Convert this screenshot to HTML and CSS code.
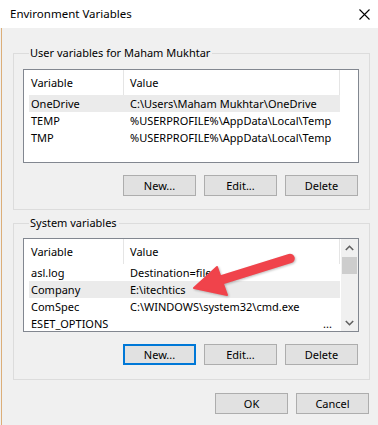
FILE: index.html
```html
<!DOCTYPE html>
<html lang="en">
<head>
<meta charset="utf-8">
<title>Environment Variables</title>
<link rel="stylesheet" href="styles.css">
</head>
<body>
<div class="window">
  <div class="titlebar">
    <span class="title">Environment Variables</span>
    <svg class="close" width="11" height="11" viewBox="0 0 11 11"><path d="M0.5 0.5 L10.5 10.5 M10.5 0.5 L0.5 10.5" stroke="#000" stroke-width="1.1" fill="none"/></svg>
  </div>
  <div class="content">
    <div class="group">
      <div class="group-label">User variables for Maham Mukhtar</div>
      <div class="list">
        <div class="cols">
          <div class="row header"><div class="c1">Variable</div><div class="c2">Value</div></div>
          <div class="row selected"><div class="c1">OneDrive</div><div class="c2">C:\Users\Maham Mukhtar\OneDrive</div></div>
          <div class="row"><div class="c1">TEMP</div><div class="c2">%USERPROFILE%\AppData\Local\Temp</div></div>
          <div class="row"><div class="c1">TMP</div><div class="c2">%USERPROFILE%\AppData\Local\Temp</div></div>
        </div>
      </div>
      <div class="buttons">
        <button class="btn">New...</button>
        <button class="btn">Edit...</button>
        <button class="btn">Delete</button>
      </div>
    </div>
    <div class="group group-system">
      <div class="group-label">System variables</div>
      <div class="list">
        <div class="cols">
          <div class="row header"><div class="c1">Variable</div><div class="c2">Value</div></div>
          <div class="row"><div class="c1">asl.log</div><div class="c2">Destination=file</div></div>
          <div class="row selected"><div class="c1">Company</div><div class="c2">E:\itechtics</div></div>
          <div class="row"><div class="c1">ComSpec</div><div class="c2">C:\WINDOWS\system32\cmd.exe</div></div>
          <div class="row"><div class="c1">ESET_OPTIONS</div><div class="c2 trunc">...</div></div>
        </div>
        <div class="scrollbar">
          <div class="sb-arrow"><svg width="9" height="6" viewBox="0 0 9 6"><path d="M0.8 5 L4.5 1.3 L8.2 5" stroke="#606060" stroke-width="1.6" fill="none"/></svg></div>
          <div class="sb-track"><div class="sb-thumb"></div></div>
          <div class="sb-arrow"><svg width="9" height="6" viewBox="0 0 9 6"><path d="M0.8 1 L4.5 4.7 L8.2 1" stroke="#606060" stroke-width="1.6" fill="none"/></svg></div>
        </div>
      </div>
      <div class="buttons">
        <button class="btn focused">New...</button>
        <button class="btn">Edit...</button>
        <button class="btn">Delete</button>
      </div>
    </div>
    <div class="dialog-buttons">
      <button class="btn">OK</button>
      <button class="btn">Cancel</button>
    </div>
  </div>
  <svg class="arrow" width="378" height="425" viewBox="0 0 378 425">
    <g fill="#f0434b" stroke="#f0434b">
      <line x1="290" y1="258.5" x2="221" y2="280" stroke-width="9.5" stroke-linecap="round"/>
      <polygon points="194,288 217,267 227,295" stroke-width="2" stroke-linejoin="round"/>
    </g>
  </svg>
</div>
</body>
</html>
```

FILE: styles.css
```css
* {
  box-sizing: border-box;
}

html, body {
  margin: 0;
  padding: 0;
}

body {
  width: 378px;
  height: 425px;
  overflow: hidden;
  background: #f0f0f0;
  font-family: "Noto Sans", "Open Sans", sans-serif;
  font-size: 11px;
  color: #000;
}

.window {
  position: relative;
  width: 378px;
  height: 425px;
}

.titlebar {
  height: 28px;
  background: #fff;
  display: flex;
  align-items: center;
  padding-left: 10px;
  padding-right: 8px;
}

.title {
  flex: 1;
  line-height: 16px;
  font-size: 11.5px;
}

.close {
  display: block;
}

.content {
  height: 397px;
  padding: 25px 8px 0 13px;
  background: linear-gradient(to right, #f0f0f0 1px, #dcae78 1px, #dcae78 2px, transparent 2px);
}

.group {
  height: 157px;
  border: 1px solid #dcdcdc;
  padding: 0 10px 0 9px;
}

.group-system {
  margin-top: 13px;
}

.group-label {
  width: fit-content;
  margin: -8px 0 0 6px;
  padding: 0 2px 0 1px;
  line-height: 14px;
  height: 14px;
  background: #f0f0f0;
  white-space: nowrap;
}

.list {
  margin-top: 9px;
  height: 94px;
  border: 1px solid #828790;
  background: #fff;
  display: flex;
  overflow: hidden;
}

.group-system .list {
  margin-top: 8px;
}

.cols {
  flex: 1;
  padding-left: 5px;
  overflow: hidden;
}

.row {
  display: flex;
  height: 17px;
  line-height: 17px;
  width: 311px;
  white-space: nowrap;
}

.row.header {
  height: 25px;
  line-height: 25px;
}

.row.selected {
  background: #ebebeb;
}

.c1 {
  width: 95px;
  padding-left: 2px;
  overflow: hidden;
}

.c2 {
  width: 216px;
  padding-left: 6px;
  overflow: hidden;
}

.header .c1,
.header .c2 {
  border-right: 1px solid #e5e5e5;
}

.c2.trunc {
  padding-left: 199px;
}

.scrollbar {
  width: 17px;
  background: #f0f0f0;
  display: flex;
  flex-direction: column;
}

.sb-arrow {
  height: 17px;
  display: flex;
  align-items: center;
  justify-content: center;
}

.sb-arrow svg {
  display: block;
}

.sb-track {
  flex: 1;
  padding-top: 1px;
}

.sb-thumb {
  height: 17px;
  margin: 0 1px;
  background: #cdcdcd;
}

.buttons,
.dialog-buttons {
  display: flex;
  justify-content: flex-end;
  gap: 8px;
}

.buttons {
  margin-top: 12px;
  padding-right: 1px;
}

.dialog-buttons {
  margin-top: 13px;
  padding-right: 1px;
}

.btn {
  width: 73px;
  height: 21px;
  margin: 0;
  padding: 0;
  font-family: inherit;
  font-size: 11px;
  line-height: 19px;
  color: #000;
  background: #e1e1e1;
  border: 1px solid #adadad;
  border-radius: 0;
}

.btn.focused {
  border: 2px solid #0078d7;
  line-height: 17px;
}

.arrow {
  position: absolute;
  left: 0;
  top: 0;
  pointer-events: none;
  filter: drop-shadow(1px 1px 1px rgba(0, 0, 0, 0.25));
}
```
